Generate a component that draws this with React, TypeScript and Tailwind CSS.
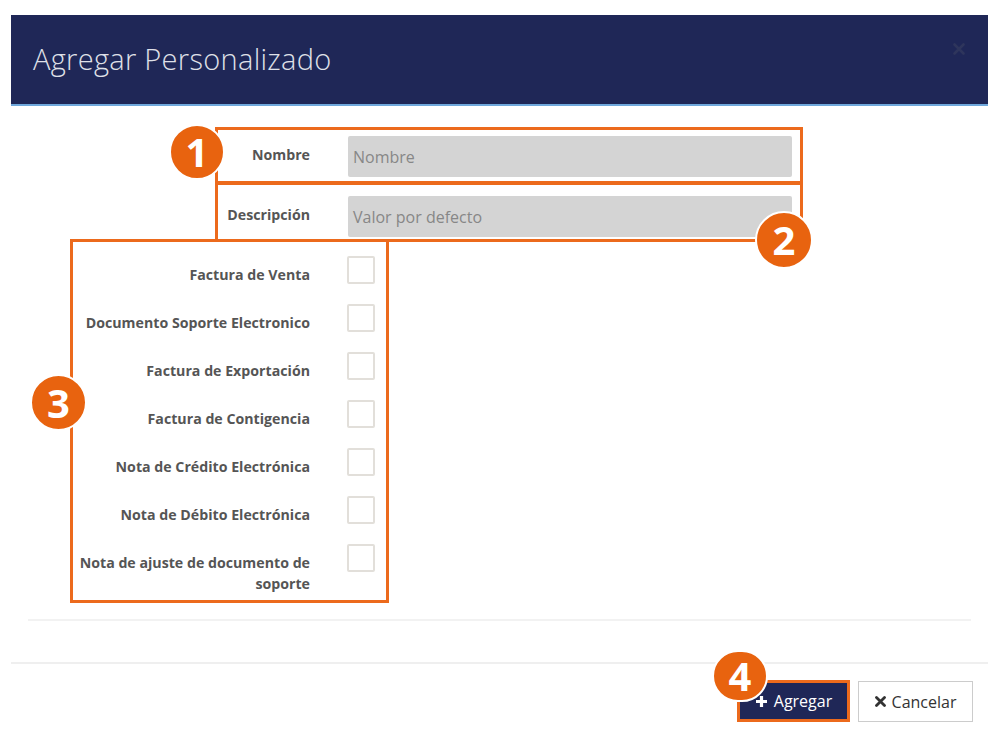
import React from "react";

const labels = [
  "Factura de Venta",
  "Documento Soporte Electronico",
  "Factura de Exportación",
  "Factura de Contigencia",
  "Nota de Crédito Electrónica",
  "Nota de Débito Electrónica",
  "Nota de ajuste de documento de soporte",
];

function Badge({ n, className }: { n: string; className: string }) {
  return (
    <div
      className={
        "absolute rounded-full bg-[#e8630f] border-2 border-white flex items-center justify-center text-white font-bold text-[40px] leading-none font-['Open_Sans',sans-serif] " +
        className
      }
    >
      {n}
    </div>
  );
}

export default function App() {
  return (
    <div className="relative w-[1005px] h-[733px] bg-white overflow-hidden font-['Open_Sans',sans-serif]">
      <div className="ml-[11px] pt-[15px] w-[977px]">
        {/* Header */}
        <div className="h-[91px] bg-[#1f2757] border-b-2 border-[#6fa8dc] flex items-center justify-between pl-[22px] pr-[23px]">
          <div className="text-[29px] font-light text-[#dfe0e8] tracking-[0.3px] mt-[-1px]">
            Agregar Personalizado
          </div>
          <svg width="12" height="12" viewBox="0 0 12 12" className="mt-[-22px]">
            <path d="M1.5 1.5 L10.5 10.5 M10.5 1.5 L1.5 10.5" stroke="#2e355c" strokeWidth="2.6" strokeLinecap="round" />
          </svg>
        </div>

        {/* Body */}
        <div className="pt-[30px] pl-[68px]">
          <div className="flex items-start h-[60px]">
            <div className="w-[231px] text-right pt-[9px] leading-[20px] text-[14.2px] font-bold text-[#555]">Nombre</div>
            <div className="ml-[38px] w-[444px] h-[41px] bg-[#d4d4d4] rounded-[2px] flex items-center pl-[5px] text-[16px] text-[#878787]">
              Nombre
            </div>
          </div>
          <div className="flex items-start h-[60px]">
            <div className="w-[231px] text-right pt-[9px] leading-[20px] text-[14.2px] font-bold text-[#555]">Descripción</div>
            <div className="ml-[38px] w-[444px] h-[41px] bg-[#d4d4d4] rounded-[2px] flex items-center pl-[5px] text-[16px] text-[#878787]">
              Valor por defecto
            </div>
          </div>
          {labels.map((l, i) => (
            <div key={l} className={"flex items-start " + (i === labels.length - 1 ? "h-[50px]" : "h-[48px]")}>
              <div className="w-[233px] ml-[-2px] text-right pt-[8px] leading-[21px] text-[14.2px] font-bold text-[#555]">{l}</div>
              <div className="ml-[37px] w-[28px] h-[28px] border-2 border-[#e2dfda] rounded-[2px] bg-white" />
            </div>
          ))}
        </div>

        <div className="mt-[25px] mx-[17px] h-[2px] bg-[#f2f2f2]" />

        {/* Footer */}
        <div className="mt-[41px] border-t-2 border-[#efefef] pt-[16px] pr-[15px] flex justify-end items-start gap-[8px]">
          <div className="w-[113px] h-[42px] border-[3px] border-[#ec6a1c] bg-[#1f2757] flex items-center justify-center gap-[6px] text-white text-[16px]">
            <svg width="13" height="13" viewBox="0 0 13 13">
              <path d="M6.5 1 V12 M1 6.5 H12" stroke="#ffffff" strokeWidth="3.2" />
            </svg>
            <span>Agregar</span>
          </div>
          <div className="w-[115px] h-[41px] mt-[1px] border border-[#cccccc] bg-white flex items-center justify-center gap-[6px] text-[#333] text-[16px]">
            <svg width="11" height="11" viewBox="0 0 11 11">
              <path d="M1.5 1.5 L9.5 9.5 M9.5 1.5 L1.5 9.5" stroke="#333333" strokeWidth="2.8" strokeLinecap="round" />
            </svg>
            <span>Cancelar</span>
          </div>
        </div>
      </div>

      {/* Annotation boxes */}
      <div className="absolute left-[215px] top-[127px] w-[588px] h-[57px] border-[3px] border-[#ec6a1c]" />
      <div className="absolute left-[215px] top-[182px] w-[588px] h-[60px] border-[3px] border-[#ec6a1c]" />
      <div className="absolute left-[70px] top-[239px] w-[319px] h-[364px] border-[3px] border-[#ec6a1c]" />

      <Badge n="1" className="left-[169px] top-[124px] w-[56px] h-[56px]" />
      <Badge n="2" className="left-[755px] top-[211px] w-[58px] h-[58px]" />
      <Badge n="3" className="left-[30px] top-[374px] w-[57px] h-[57px]" />
      <Badge n="4" className="left-[712px] top-[650px] w-[56px] h-[52px]" />
    </div>
  );
}
